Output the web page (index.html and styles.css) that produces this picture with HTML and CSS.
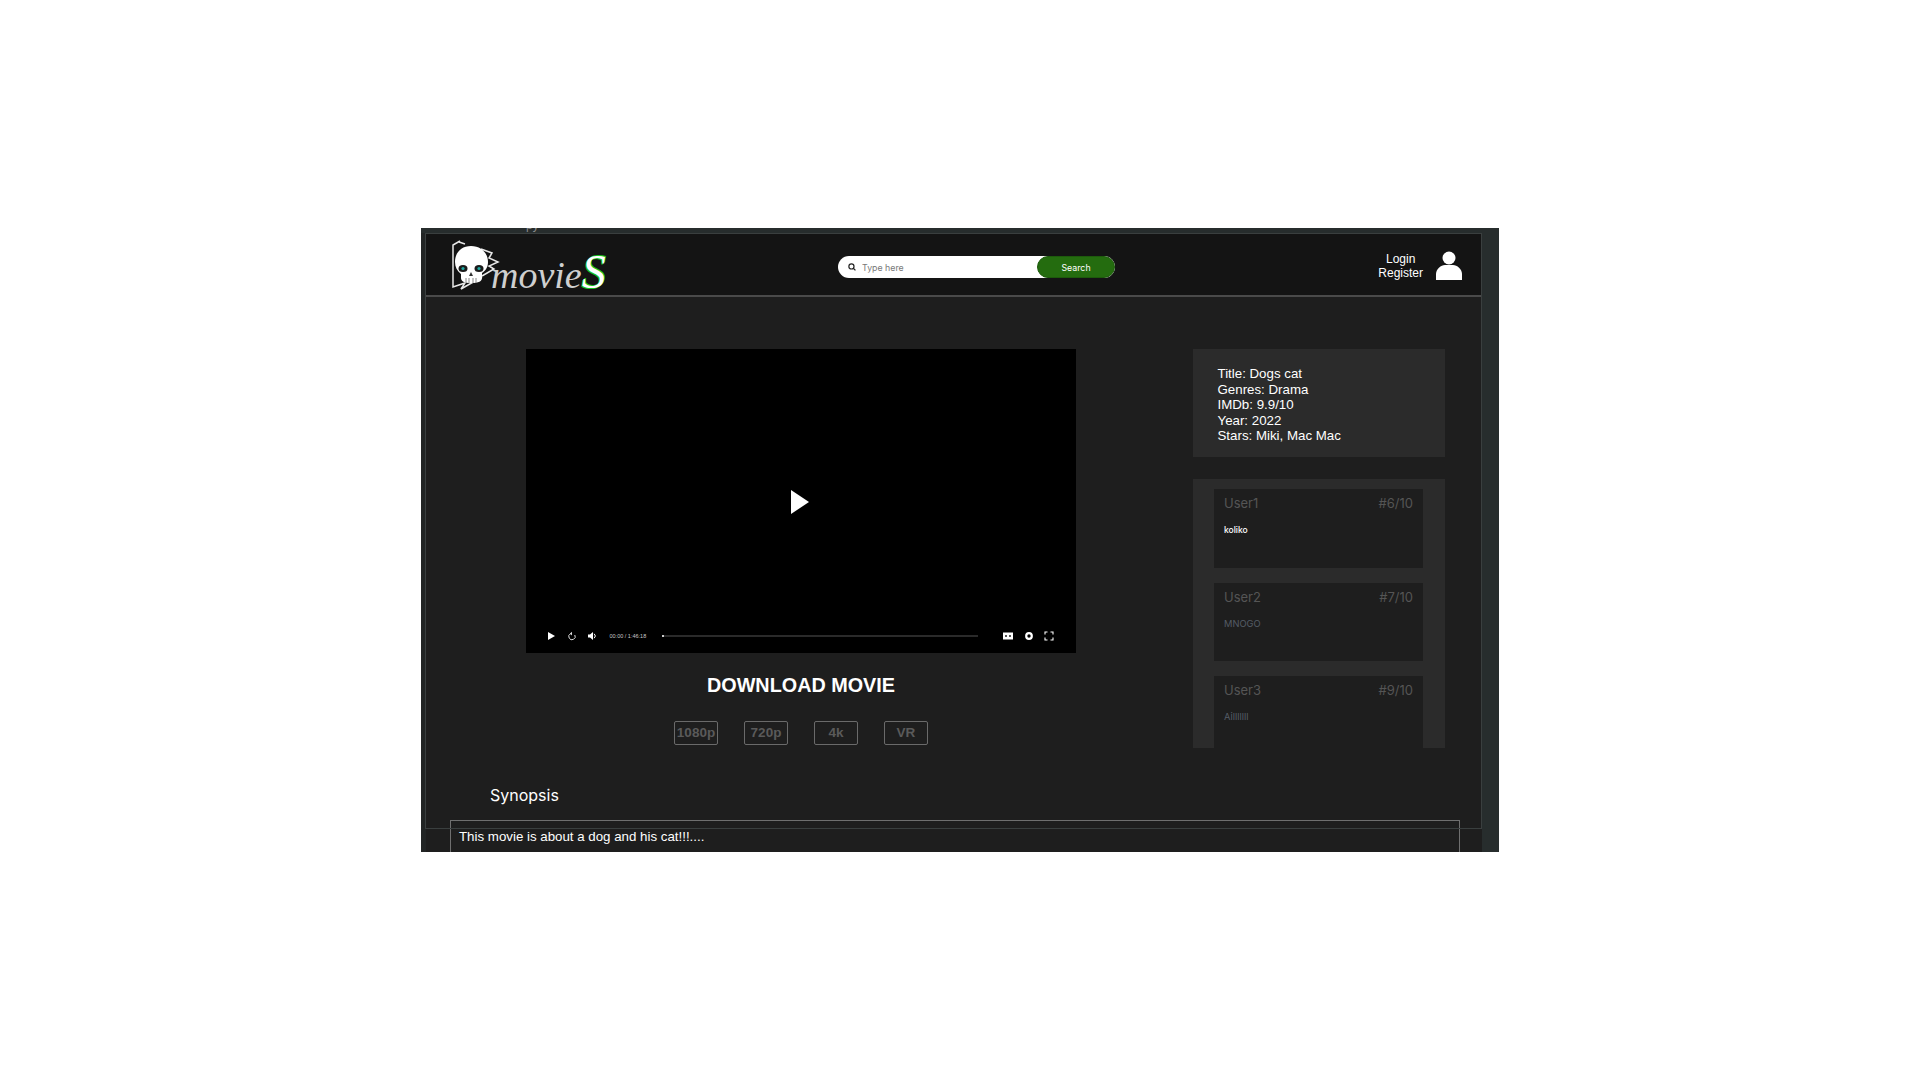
FILE: index.html
```html
<!DOCTYPE html>
<html lang="en">
<head>
    <meta charset="UTF-8">
    <title>movieS - Dogs cat</title>
    <link rel="stylesheet" href="styles.css">
</head>
<body>
    <div class="frame">
        <span class="scrap">py</span>
        <div class="page">
            <div class="page-line"></div>
            <header>
                <a class="logo" href="#">
                    <svg class="skull" viewBox="0 0 48 48" width="48" height="48">
                        <path d="M9 1L2 5V47L14 43L10 49L31 37" fill="none" stroke="#e8e8e8" stroke-width="1.500"/>
                        <path d="M8 2L14 4M30 9L41 13L38 18L47 22L38 26L43 29L31 36" fill="none" stroke="#e8e8e8" stroke-width="1.500"/>
                        <path d="M20 6C30 6 37 13 37 22C37 28 34 31 31 33V38C31 41 28 43 20 43C13 43 10 41 10 38V34C6 31 4 27 4 22C4 13 10 6 20 6Z" fill="#fff"/>
                        <ellipse cx="12" cy="28.500" rx="4.500" ry="3.500" fill="#1b1b1b"/>
                        <ellipse cx="28" cy="28.500" rx="4.500" ry="3.500" fill="#1b1b1b"/>
                        <circle cx="12" cy="28.500" r="1.600" fill="#1fa7a0"/>
                        <circle cx="28" cy="28.500" r="1.600" fill="#1fa7a0"/>
                        <path d="M20 32L18 36H22Z" fill="#333"/>
                        <path d="M15 38V43M18 38V43M22 38V43M25 38V43" stroke="#555" stroke-width=".7"/>
                    </svg>
                    <span class="logo-word">movie</span><span class="logo-s">S</span>
                </a>
                <form class="search">
                    <svg class="search-icon" viewBox="0 0 10 10" width="8" height="8">
                        <circle cx="4.300" cy="4.300" r="3.200" fill="none" stroke="#222" stroke-width="1.500"/>
                        <path d="M6.600 6.600L9.300 9.300" stroke="#222" stroke-width="1.500"/>
                    </svg>
                    <input type="text" placeholder="Type here">
                    <button type="button">Search</button>
                </form>
                <div class="account">
                    <div class="account-links">
                        <a href="#">Login</a>
                        <a href="#">Register</a>
                    </div>
                    <svg viewBox="0 0 26 29" width="26" height="29">
                        <circle cx="13" cy="7" r="6.500" fill="#fff"/>
                        <path d="M0 29V23C0 18 5 14 9 14H17C21 14 26 18 26 23V29Z" fill="#fff"/>
                    </svg>
                </div>
            </header>

            <div class="main">
                <div class="movie">
                    <div class="player">
                        <svg class="big-play" viewBox="0 0 18 24" width="18" height="24"><path d="M0 0L18 12L0 24Z" fill="#fff"/></svg>
                        <div class="controls">
                            <svg viewBox="0 0 10 10" width="10" height="10"><path d="M2 1L9 5L2 9Z" fill="#fff"/></svg>
                            <svg viewBox="0 0 10 10" width="10" height="10"><path d="M7.800 4A3.200 3.200 0 1 1 3.500 2.700H5" fill="none" stroke="#ddd" stroke-width="1"/><path d="M5 .8V4.400L3 2.600Z" fill="#ddd"/></svg>
                            <svg viewBox="0 0 10 10" width="10" height="10"><path d="M1 3.500H3L6 1V9L3 6.500H1Z" fill="#fff"/><path d="M7.200 2.800A3 3 0 0 1 7.200 7.200" fill="none" stroke="#fff" stroke-width="1"/></svg>
                            <span class="time">00:00 / 1:46:18</span>
                            <div class="track"><div class="knob"></div></div>
                            <svg viewBox="0 0 10 10" width="10" height="10"><path d="M0 1.500H10V8.500H0Z" fill="#fff"/><path d="M2 4H4V6H2ZM6 4H8V6H6Z" fill="#555"/></svg>
                            <svg viewBox="0 0 10 10" width="10" height="10"><circle cx="5" cy="5" r="2.800" fill="none" stroke="#fff" stroke-width="2.200"/></svg>
                            <svg viewBox="0 0 10 10" width="10" height="10"><path d="M1 3.500V1H3.500M6.500 1H9V3.500M9 6.500V9H6.500M3.500 9H1V6.500" fill="none" stroke="#fff" stroke-width="1.100"/></svg>
                        </div>
                    </div>
                    <h2 class="download-title">DOWNLOAD MOVIE</h2>
                    <div class="qualities">
                        <a href="#">1080p</a>
                        <a href="#">720p</a>
                        <a href="#">4k</a>
                        <a href="#">VR</a>
                    </div>
                </div>

                <aside class="side">
                    <div class="info">
                        <p>Title: Dogs cat</p>
                        <p>Genres: Drama</p>
                        <p>IMDb: 9.9/10</p>
                        <p>Year: 2022</p>
                        <p>Stars: Miki, Mac Mac</p>
                    </div>
                    <div class="reviews">
                        <div class="review">
                            <div class="review-head"><span>User1</span><span>#6/10</span></div>
                            <p class="review-text first">koliko</p>
                        </div>
                        <div class="review">
                            <div class="review-head"><span>User2</span><span>#7/10</span></div>
                            <p class="review-text">MNOGO</p>
                        </div>
                        <div class="review">
                            <div class="review-head"><span>User3</span><span>#9/10</span></div>
                            <p class="review-text">Ailllllll</p>
                        </div>
                    </div>
                </aside>
            </div>

            <h3 class="synopsis-title">Synopsis</h3>
            <div class="synopsis">This movie is about a dog and his cat!!!....</div>
        </div>
    </div>
</body>
</html>
```

FILE: styles.css
```css
body {
    margin: 0;
    padding: 0;
    background-color: #ffffff;
    font-family: 'Liberation Sans', Arial, sans-serif;
}
.frame {
    position: relative;
    width: 1078px;
    height: 624px;
    margin: 228px auto 0;
    padding-top: 5px;
    box-sizing: border-box;
    background-color: #272d2d;
    overflow: hidden;
}
.scrap {
    position: absolute;
    left: 105px;
    top: -10px;
    font-size: 12px;
    line-height: 14px;
    color: #8a8a8a;
}
.page {
    position: relative;
    width: 1056px;
    height: 700px;
    margin-left: 5px;
    background-color: #1e1e1e;
    box-shadow: -5px 0 0 #222525;
}
.page-line {
    position: absolute;
    left: -1px;
    top: 0;
    width: 1055px;
    height: 594px;
    border: 1px solid #3a3f3f;
    pointer-events: none;
}
header {
    display: flex;
    align-items: center;
    height: 64px;
    padding: 6px 20px 0 25px;
    box-sizing: border-box;
    background-color: #141414;
    border-bottom: 2px solid #4a4a4a;
}
.logo {
    display: flex;
    align-items: baseline;
    width: 160px;
    height: 50px;
    margin-bottom: 4px;
    text-decoration: none;
}
.skull {
    flex: none;
    overflow: visible;
}
.logo-word {
    margin-left: -8px;
    font-family: 'Liberation Serif', serif;
    font-style: italic;
    font-size: 38px;
    line-height: 46px;
    color: #cfcfcf;
}
.logo-s {
    font-family: 'Liberation Serif', serif;
    font-style: italic;
    font-size: 48px;
    line-height: 46px;
    color: #ffffff;
    text-shadow: -1px 1px 0 #18c21e, 1px -1px 0 #18c21e;
}
.search {
    display: flex;
    align-items: center;
    width: 277px;
    height: 22px;
    margin-left: 227px;
    padding-left: 10px;
    box-sizing: border-box;
    background-color: #ffffff;
    border-radius: 11px;
}
.search-icon {
    flex: none;
}
.search input {
    flex: 1;
    min-width: 0;
    margin-left: 6px;
    padding: 0;
    border: none;
    outline: none;
    background: none;
    font-family: 'Inter', sans-serif;
    font-size: 8.8px;
}
.search input::placeholder {
    color: #777777;
}
.search button {
    flex: none;
    width: 78px;
    height: 22px;
    padding: 0;
    border: 1px solid #1d5a0c;
    border-radius: 11px;
    background-color: #246c0f;
    color: #ffffff;
    font-family: 'Inter', sans-serif;
    font-size: 8.8px;
}
.account {
    display: flex;
    align-items: center;
    gap: 13px;
    margin-left: auto;
    margin-bottom: 3px;
}
.account-links {
    display: flex;
    flex-direction: column;
    align-items: center;
}
.account-links a {
    color: #ffffff;
    text-decoration: none;
    font-size: 12px;
    line-height: 14px;
}
.main {
    display: flex;
    padding: 52px 0 0 100px;
}
.movie {
    width: 550px;
}
.player {
    position: relative;
    display: flex;
    align-items: center;
    justify-content: center;
    height: 304px;
    padding: 2px 2px 0 0;
    box-sizing: border-box;
    background-color: #000000;
}
.controls {
    position: absolute;
    left: 20px;
    right: 22px;
    bottom: 12px;
    display: flex;
    align-items: center;
    gap: 10.5px;
}
.time {
    width: 39px;
    margin-left: 2px;
    font-size: 5.5px;
    white-space: nowrap;
    color: #c8c8c8;
}
.track {
    position: relative;
    flex: 1;
    height: 2px;
    margin: 0 14.5px 0 3px;
    background-color: #2a2a2a;
}
.knob {
    position: absolute;
    left: 0;
    top: 0;
    width: 2px;
    height: 2px;
    background-color: #cccccc;
}
.download-title {
    margin: 21px 0 0;
    text-align: center;
    font-size: 19.8px;
    line-height: 23px;
    font-weight: bold;
    color: #ffffff;
}
.qualities {
    display: flex;
    justify-content: center;
    gap: 26px;
    margin-top: 24px;
}
.qualities a {
    width: 44px;
    height: 24px;
    box-sizing: border-box;
    border: 1px solid #6a6a6a;
    border-radius: 2px;
    text-align: center;
    color: #5a5a5a;
    text-decoration: none;
    font-size: 13.5px;
    font-weight: bold;
    line-height: 22px;
}
.side {
    width: 252.5px;
    margin-left: 116.5px;
}
.info {
    height: 108px;
    padding: 17px 25px;
    box-sizing: border-box;
    background-color: #2b2b2b;
    color: #ffffff;
    font-size: 13.3px;
    line-height: 15.5px;
}
.info p {
    margin: 0;
}
.reviews {
    display: flex;
    flex-direction: column;
    gap: 15px;
    height: 269px;
    margin-top: 22px;
    padding: 10px 22px 0 21.5px;
    box-sizing: border-box;
    background-color: #2b2b2b;
    overflow: hidden;
}
.review {
    flex: none;
    height: 78.5px;
    padding: 5px 10px;
    box-sizing: border-box;
    background-color: #1e1e1e;
}
.review-head {
    display: flex;
    justify-content: space-between;
    font-family: 'Inter', sans-serif;
    font-size: 13px;
    line-height: 18px;
    color: #555555;
}
.review-text {
    margin: 12px 0 0;
    font-family: 'Inter', sans-serif;
    font-size: 9.3px;
    line-height: 12px;
    color: #555c66;
}
.review-text.first {
    font-size: 8.5px;
    font-weight: 500;
    color: #ffffff;
}
.synopsis-title {
    margin: 0;
    padding: 37px 0 0 64px;
    font-family: 'Inter', sans-serif;
    font-size: 16px;
    line-height: 20px;
    font-weight: 400;
    color: #ffffff;
}
.synopsis {
    width: 1010px;
    height: 100px;
    margin: 15px 0 0 24px;
    padding: 8px 8px;
    box-sizing: border-box;
    border: 1px solid #6f6f6f;
    color: #ffffff;
    font-size: 13.3px;
    line-height: 16px;
}
```
